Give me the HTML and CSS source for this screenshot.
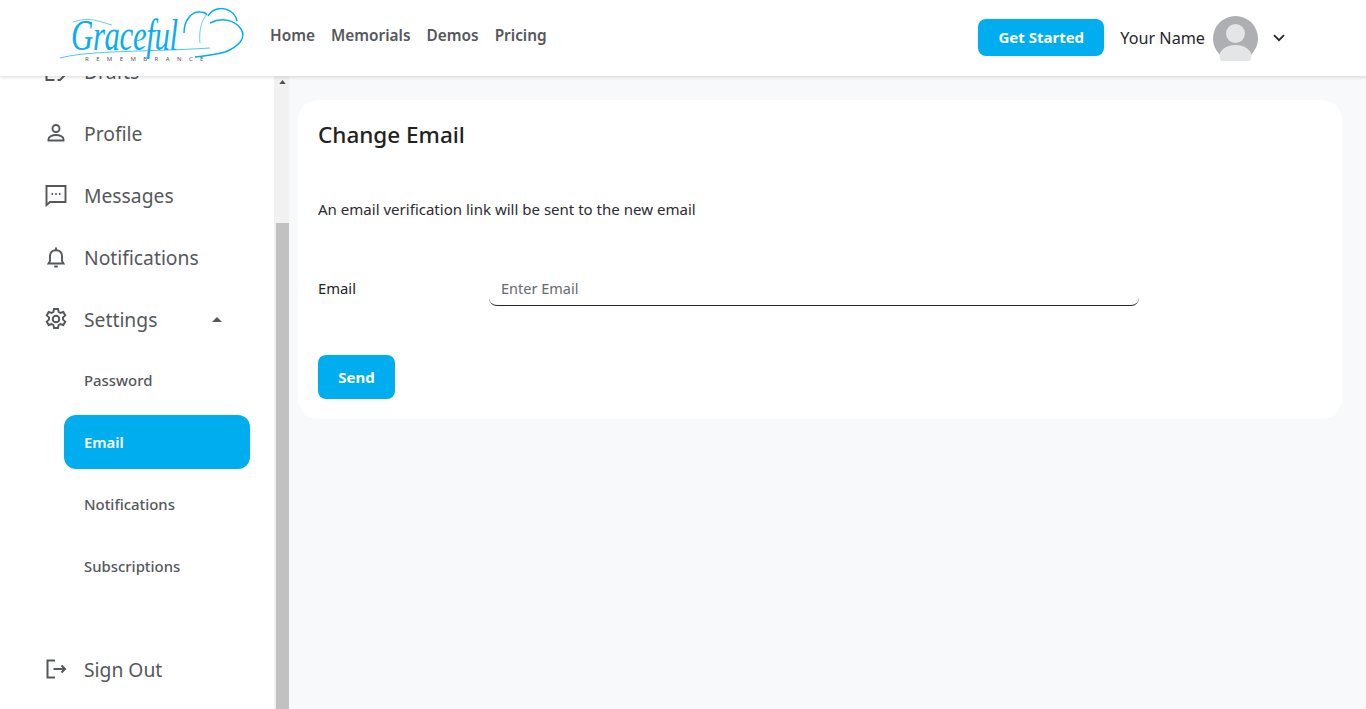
FILE: index.html
```html
<!DOCTYPE html>
<html lang="en">
<head>
<meta charset="utf-8">
<title>Change Email</title>
<link rel="stylesheet" href="styles.css">
</head>
<body>
<header class="topbar">
  <a class="logo">
    <svg class="logo-art" viewBox="59 3 190 70" fill="none" stroke="#00aeef" aria-hidden="true">
      <path d="M60 58 C90 50 150 52 210 48" stroke-width="0.7"/>
      <path d="M73 22 C90 16 100 22 112 25" stroke-width="0.6"/>
      <path d="M184 33 C184 20 192 11 200 12 C204 12 206 13 207 15" stroke-width="1.5"/>
      <path d="M207 14 C200 22 199 34 200 43" stroke-width="0.6"/>
      <path d="M208 16 C212 9 222 6 230 11 C233 13 236 16 237 21" stroke-width="1.5"/>
      <path d="M210 23 C222 17 235 20 241 29 C247 38 238 47 225 52 C214 55 205 56 195 57" stroke-width="1.5"/>
    </svg>
    <span class="logo-script">Graceful</span>
    <span class="logo-sub">REMEMBRANCE</span>
  </a>
  <nav class="mainnav">
    <a>Home</a><a>Memorials</a><a>Demos</a><a>Pricing</a>
  </nav>
  <div class="topright">
    <a class="btn btn-start">Get Started</a>
    <span class="username">Your Name</span>
    <svg class="avatar" viewBox="0 0 45 45" aria-hidden="true">
      <circle cx="22.500" cy="22.500" r="22.500" fill="#adafb2"/>
      <circle cx="22.500" cy="17.500" r="9.500" fill="#e4e5e6"/>
      <ellipse cx="22.500" cy="40" rx="16" ry="11" fill="#e4e5e6"/>
    </svg>
    <svg class="chev" viewBox="0 0 12 8" fill="none" stroke="#26262b" stroke-width="1.800" aria-hidden="true"><path d="M1 1.200 L6 6.200 L11 1.200"/></svg>
  </div>
</header>
<div class="shell">
  <aside class="sidebar">
    <div class="sidescroll">
      <ul class="sidelist">
        <li class="item">
          <svg class="ico" viewBox="0 0 24 24" fill="none" stroke="#55575b" stroke-width="2"><path d="M2.500 14v7h8"/><path d="M13.500 21h2.500l6-6"/></svg>
          <span>Drafts</span>
        </li>
        <li class="item">
          <svg class="ico" viewBox="0 0 24 24" fill="none" stroke="#55575b" stroke-width="1.900"><circle cx="12" cy="7.500" r="3.500"/><path d="M4.500 19.500v-1.500c0-2.500 4-4 7.500-4s7.500 1.500 7.500 4v1.500z"/></svg>
          <span>Profile</span>
        </li>
        <li class="item">
          <svg class="ico" viewBox="0 0 24 24" fill="none" stroke="#55575b" stroke-width="1.900"><path d="M2.500 3h19v16H6l-3.500 3z"/><path d="M7.500 11h1.600M11.200 11h1.600M14.900 11h1.600"/></svg>
          <span>Messages</span>
        </li>
        <li class="item">
          <svg class="ico" viewBox="0 0 24 24" fill="none" stroke="#55575b" stroke-width="1.900"><path d="M4.500 18.500h15l-1.500-2.500v-5c0-3.500-2.500-5.800-6-5.800s-6 2.300-6 5.800v5z"/><path d="M12 2.500v3M10.300 21.500h3.400"/></svg>
          <span>Notifications</span>
        </li>
        <li class="item">
          <svg class="ico" viewBox="0 0 24 24" fill="none" stroke="#55575b" stroke-width="1.900"><circle cx="12" cy="12" r="3.300"/><path d="M10 2h4l.6 3 1.800 1 2.900-1 2 3.400-2.300 2v2.200l2.300 2-2 3.400-2.900-1-1.800 1-.6 3h-4l-.6-3-1.800-1-2.900 1-2-3.400 2.300-2v-2.200l-2.300-2 2-3.400 2.900 1 1.800-1z"/></svg>
          <span>Settings</span>
          <svg class="caret" viewBox="0 0 10 5" aria-hidden="true"><path d="M0 5 L5 0 L10 5 Z" fill="#55575b"/></svg>
        </li>
        <li class="sub">Password</li>
        <li class="sub sub-active">Email</li>
        <li class="sub">Notifications</li>
        <li class="sub">Subscriptions</li>
        <li class="item item-out">
          <svg class="ico" viewBox="0 0 24 24" fill="none" stroke="#55575b" stroke-width="2"><path d="M11 3.500H3.500v17H11"/><path d="M9.500 12h11.500M17.500 8.500l3.500 3.500-3.500 3.500"/></svg>
          <span>Sign Out</span>
        </li>
      </ul>
    </div>
    <div class="scrollbar">
      <svg class="sb-arrow" viewBox="0 0 8 5" aria-hidden="true"><path d="M0 5 L4 0 L8 5 Z" fill="#505050"/></svg>
      <div class="sb-thumb"></div>
    </div>
  </aside>
  <main class="content">
    <section class="card">
      <h1>Change Email</h1>
      <p class="note">An email verification link will be sent to the new email</p>
      <div class="field">
        <label class="field-label" for="em">Email</label>
        <input class="field-input" id="em" type="text" placeholder="Enter Email">
      </div>
      <a class="btn btn-send">Send</a>
    </section>
  </main>
</div>
</body>
</html>
```
FILE: styles.css
```css
* { box-sizing: border-box; }
html, body { margin: 0; height: 100%; overflow: hidden; }
body {
  font-family: "Noto Sans", "Open Sans", sans-serif;
  background: #f8f9fb;
  color: #212529;
  display: flex;
  flex-direction: column;
}
.topbar {
  height: 76px;
  flex: none;
  background: #fff;
  display: flex;
  align-items: center;
  padding: 0 81px 0 59px;
  box-shadow: 0 1px 4px rgba(0,0,0,.16);
  position: relative;
  z-index: 2;
}
.logo { width: 190px; height: 70px; margin-right: 21px; position: relative; display: block; flex: none; }
.logo-art { position: absolute; left: 0; top: 0; width: 190px; height: 70px; }
.logo-script {
  position: absolute; left: 12px; top: 14px;
  font-family: "Liberation Serif", serif;
  font-style: italic;
  font-size: 44px;
  line-height: 38px;
  letter-spacing: -0.5px;
  color: #0aaeef;
  transform: scaleX(0.7);
  transform-origin: left center;
}
.logo-sub {
  position: absolute; left: 26px; top: 52px;
  font-size: 6px; line-height: 8px;
  letter-spacing: 7.400px;
  color: #555;
  white-space: nowrap;
}
.mainnav { display: flex; gap: 16px; margin-top: -6px; }
.mainnav a { font-size: 15.400px; font-weight: 600; color: #55575b; }
.topright { margin-left: auto; display: flex; align-items: center; }
.btn {
  background: #00aeef;
  color: #fff;
  font-weight: 700;
  font-size: 15px;
  border-radius: 8px;
  display: flex;
  align-items: center;
  justify-content: center;
}
.btn-start { width: 126px; height: 37px; margin-bottom: 2px; }
.username { font-size: 16.200px; margin-left: 16px; color: #26262b; }
.avatar { width: 45px; height: 45px; margin-left: 8px; }
.chev { width: 12px; height: 8px; margin-left: 15px; }
.shell { flex: 1; display: flex; min-height: 0; }
.sidebar { width: 289px; flex: none; display: flex; background: #fff; overflow: hidden; }
.sidescroll { width: 274px; flex: none; overflow: hidden; }
.sidelist { list-style: none; margin: -36px 0 0; padding: 0; }
.item {
  height: 62px;
  display: flex;
  align-items: center;
  padding-left: 44px;
  font-size: 19.300px;
  color: #55575b;
}
.ico { width: 24px; height: 24px; margin-right: 16px; flex: none; }
.caret { width: 10px; height: 5px; margin-left: 55px; }
.sub {
  height: 54px;
  margin: 0 24px 8px 64px;
  padding-left: 20px;
  border-radius: 12px;
  display: flex;
  align-items: center;
  font-size: 14.900px;
  font-weight: 500;
  color: #55575b;
}
.item + .sub { margin-top: 3px; }
.sub-active { background: #00aeef; color: #fff; font-weight: 600; }
.item-out { margin-top: 45px; }
.scrollbar { width: 15px; flex: none; background: #f1f1f1; position: relative; }
.sb-arrow { position: absolute; left: 5px; top: 4px; width: 7px; height: 4px; }
.sb-thumb { position: absolute; left: 2px; right: 0; top: 147px; bottom: 0; background: #c1c1c1; }
.content { flex: 1; padding: 24px 24px 0 9px; min-width: 0; }
.card {
  background: #fff;
  border-radius: 20px;
  height: 319px;
  padding: 20px;
}
h1 { margin: -1px 0 0; font-size: 22.500px; line-height: 32px; font-weight: 500; color: #212121; }
.note { margin: 48px 0 0; font-size: 15.040px; line-height: 20px; color: #2b2b33; }
.field { display: flex; align-items: center; margin-top: 43px; height: 44px; }
.field-label { width: 171px; font-size: 14.800px; padding-top: 8px; color: #212529; }
.field-input {
  width: 650px;
  height: 44px;
  border: 0;
  border-bottom: 1px solid #26262b;
  border-radius: 0 0 8px 8px;
  padding: 8px 12px 0;
  outline: 0;
  background: transparent;
  font: 14.500px "Noto Sans", sans-serif;
}
.field-input::placeholder { color: #666a70; opacity: 1; }
.btn-send { width: 77px; height: 44px; margin-top: 49px; }
```
